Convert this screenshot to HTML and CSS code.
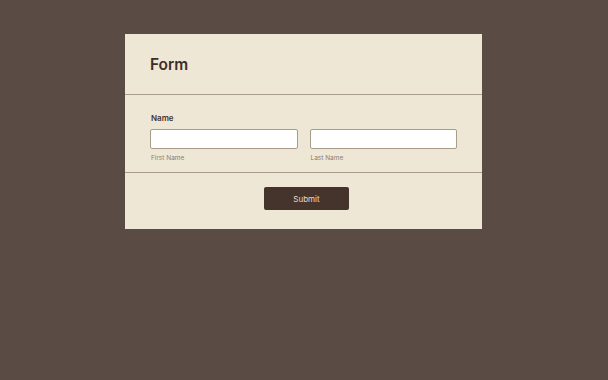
FILE: index.html
```html
<!DOCTYPE html>
<html lang="en">
<head>
  <meta charset="UTF-8">
  <title>Form</title>
  <link rel="stylesheet" href="styles.css">
</head>
<body>

  <!-- Form card -->
  <div class="card">
    <div class="card-header">
      <h1>Form</h1>
    </div>

    <div class="card-body">
      <label class="field-label">Name</label>
      <div class="name-row">
        <div class="name-col">
          <input type="text" name="first">
          <span class="sub-label">First Name</span>
        </div>
        <div class="name-col">
          <input type="text" name="last">
          <span class="sub-label">Last Name</span>
        </div>
      </div>
    </div>

    <div class="card-footer">
      <button type="submit">Submit</button>
    </div>
  </div>

</body>
</html>
```

FILE: styles.css
```css
body {
  background-color: #5a4b44;
  font-family: Inter, "Liberation Sans", sans-serif;
  margin: 0;
  padding-top: 34px;
}
.card {
  width: 357px;
  margin-left: 125px;
  background-color: #efe7d5;
}
.card-header {
  height: 60px;
  display: flex;
  align-items: center;
  padding: 0 25px;
  border-bottom: 1px solid #a99c8b;
}
.card-header h1 {
  margin: 0;
  font-size: 15.5px;
  font-weight: 600;
  color: #3d2f27;
}
.card-body {
  padding: 18px 25px 10px 25px;
  border-bottom: 1px solid #a99c8b;
}
.field-label {
  display: block;
  font-size: 8px;
  font-weight: 600;
  color: #43352d;
  margin-bottom: 6px;
  padding-left: 1px;
}
.name-row {
  display: flex;
  gap: 12px;
}
.name-col {
  flex: 1;
  min-width: 0;
  display: flex;
  flex-direction: column;
}
.name-col input {
  width: 100%;
  height: 20px;
  box-sizing: border-box;
  border: 1px solid #a99c8b;
  border-radius: 2px;
  background: #fff;
  margin: 0;
}
.sub-label {
  font-size: 6.5px;
  color: #8a7d70;
  margin-top: 5px;
  padding-left: 1px;
}
.card-footer {
  height: 56px;
  box-sizing: border-box;
  padding-top: 14px;
  display: flex;
  justify-content: center;
  align-items: flex-start;
}
.card-footer button {
  width: 85px;
  height: 23px;
  margin-left: 6px;
  border: none;
  border-radius: 2px;
  background-color: #45342b;
  color: #e6dccb;
  font-family: Inter, "Liberation Sans", sans-serif;
  font-size: 8px;
}
```
